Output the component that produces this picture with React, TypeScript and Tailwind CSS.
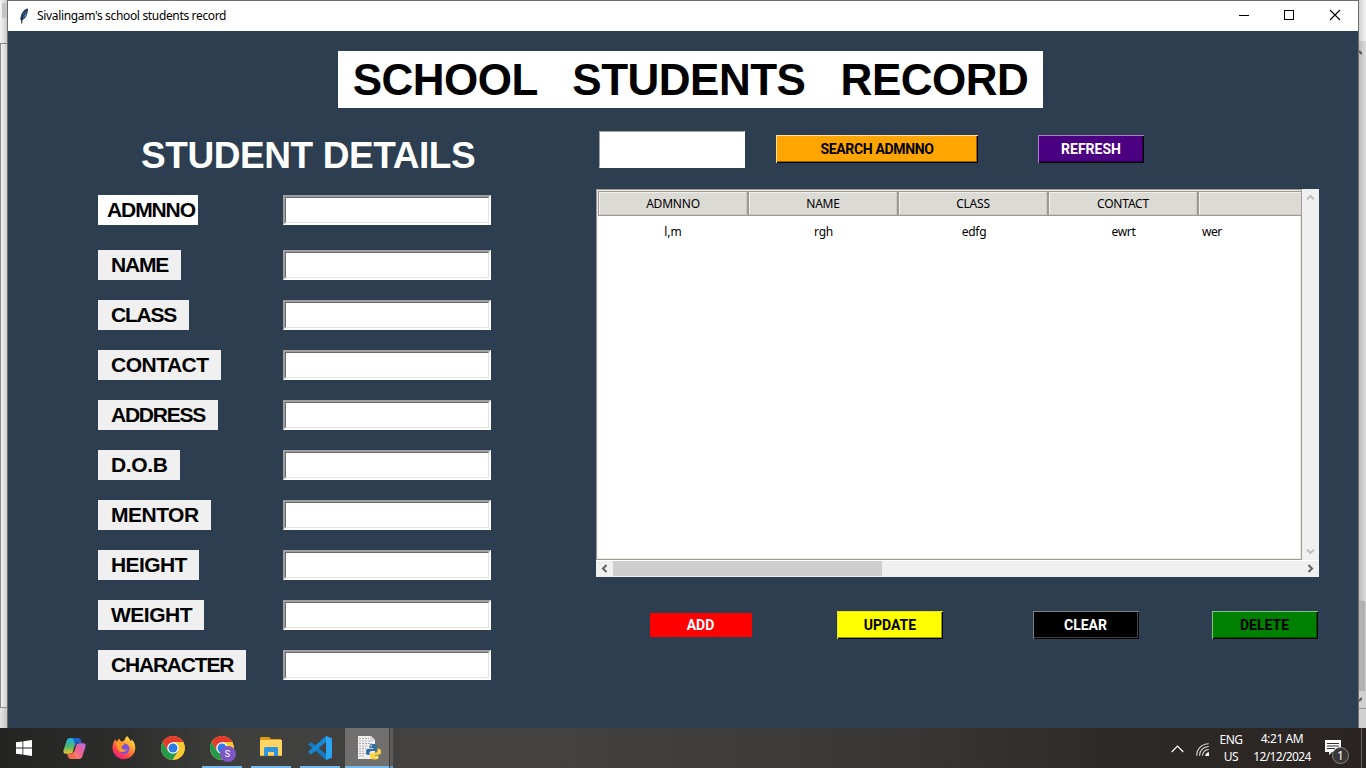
import React from "react";

const fields = [
  { label: "ADMNNO", box: "w-[100px] bg-white pl-[9px] tracking-[-1.1px]", row: "mb-[25px]" },
  { label: "NAME", box: "w-[83px] bg-[#f0f0f0] pl-[13px] tracking-[-1.15px]", row: "mb-5" },
  { label: "CLASS", box: "w-[91px] bg-[#f0f0f0] pl-[13px] tracking-[-1.2px]", row: "mb-5" },
  { label: "CONTACT", box: "w-[123px] bg-[#f0f0f0] pl-[13px] tracking-[-0.5px]", row: "mb-5" },
  { label: "ADDRESS", box: "w-[120px] bg-[#f0f0f0] pl-[13px] tracking-[-1.25px]", row: "mb-5" },
  { label: "D.O.B", box: "w-[82px] bg-[#f0f0f0] pl-[13px] tracking-[-0.35px]", row: "mb-5" },
  { label: "MENTOR", box: "w-[113px] bg-[#f0f0f0] pl-[13px] tracking-[-0.5px]", row: "mb-5" },
  { label: "HEIGHT", box: "w-[101px] bg-[#f0f0f0] pl-[13px] tracking-[-0.6px]", row: "mb-5" },
  { label: "WEIGHT", box: "w-[106px] bg-[#f0f0f0] pl-[13px] tracking-[-0.5px]", row: "mb-5" },
  { label: "CHARACTER", box: "w-[148px] bg-[#f0f0f0] pl-[13px] tracking-[-1.2px]", row: "" },
];

function TitleBar() {
  return (
    <div className="flex h-[30px] shrink-0 items-center bg-white text-black">
      <svg className="ml-[11px] h-4 w-[10px]" viewBox="0 0 10 16">
        <path d="M9 .5C5 1 1.5 5.5 1.3 11.5l1.2 1C6.5 11 9 6.500 9 .5Z" fill="#223b5c" />
        <path d="M8 2C5.500 3.500 3.500 7 3 10.800 6 9.500 7.600 6 8 2Z" fill="#5f9be0" />
        <path d="M7.500 2.500 3 10.500 2.700 15.500" fill="none" stroke="#111" strokeWidth="1" />
      </svg>
      <span className="ml-2 text-[12px] leading-4 tracking-[-0.34px]">Sivalingam's school students record</span>
      <div className="ml-auto flex h-full items-center">
        <svg className="h-[30px] w-[45px]" viewBox="0 0 45 30" shapeRendering="crispEdges"><path d="M17 14.500h10" stroke="#000" /></svg>
        <svg className="h-[30px] w-[45px]" viewBox="0 0 45 30" shapeRendering="crispEdges"><path d="M17.500 9.500h9v9h-9z" fill="none" stroke="#000" /></svg>
        <svg className="h-[30px] w-[46px]" viewBox="0 0 46 30"><path d="m18 9 10 10M28 9 18 19" stroke="#000" strokeWidth="1.100" /></svg>
      </div>
    </div>
  );
}

function Button({ children, className }: { children: React.ReactNode; className: string }) {
  return (
    <button className={`flex shrink-0 items-center justify-center font-['Roboto','Noto_Sans',sans-serif] text-[14px] font-bold leading-4 ${className}`}>
      {children}
    </button>
  );
}

function HeaderCell({ children, className = "w-[150px]" }: { children?: React.ReactNode; className?: string }) {
  return (
    <div className={`h-full shrink-0 border border-[#9e9a91] ${className}`}>
      <div className="flex h-full items-center justify-center border border-b-[#cbc9c1] border-l-[#f2f0ec] border-r-[#cbc9c1] border-t-[#f2f0ec] bg-[#dcdad5]">
        {children}
      </div>
    </div>
  );
}

function Arrow({ d, color, className }: { d: string; color: string; className: string }) {
  return (
    <div className={`flex h-[17px] w-[17px] shrink-0 items-center justify-center ${className}`}>
      <svg className="h-[9px] w-[9px]" viewBox="0 0 9 9"><path d={d} fill="none" stroke={color} strokeWidth="2" /></svg>
    </div>
  );
}

function StudentTable() {
  return (
    <div className="w-[723px] text-[12px] leading-4 text-black">
      <div className="flex h-[371px]">
        <div className="flex w-[706px] flex-col overflow-hidden border border-[#9e9a91] bg-white">
          <div className="flex h-[26px] shrink-0 border-l border-t border-[#eeebe7] tracking-[-0.2px]">
            <HeaderCell>ADMNNO</HeaderCell>
            <HeaderCell>NAME</HeaderCell>
            <HeaderCell>CLASS</HeaderCell>
            <HeaderCell>CONTACT</HeaderCell>
            <HeaderCell className="w-[150px]" />
          </div>
          <div className="flex flex-1 items-start border-b border-l border-r border-[#eeebe7] pt-2 tracking-[-0.25px]">
            <span className="w-[150px] shrink-0 text-center tracking-normal">l,m</span>
            <span className="w-[151px] shrink-0 text-center">rgh</span>
            <span className="w-[150px] shrink-0 text-center">edfg</span>
            <span className="w-[149px] shrink-0 text-center">ewrt</span>
            <span className="pl-1 tracking-[-0.5px]">wer</span>
          </div>
        </div>
        <div className="flex w-[17px] flex-col justify-between bg-[#f0f0f0]">
          <Arrow d="M1 6.500 4.500 3 8 6.500" color="#bfbfbf" className="" />
          <Arrow d="M1 2.500 4.500 6 8 2.500" color="#bfbfbf" className="" />
        </div>
      </div>
      <div className="flex h-[17px] items-stretch border-t border-white bg-[#f0f0f0]">
        <Arrow d="M6.500 1 3 4.500 6.500 8" color="#606060" className="-mt-px" />
        <div className="mb-px w-[269px] bg-[#cdcdcd]" />
        <Arrow d="M2.500 1 6 4.500 2.500 8" color="#606060" className="-mt-px ml-auto" />
      </div>
    </div>
  );
}

function Chrome({ className }: { className: string }) {
  return (
    <svg className={className} viewBox="0 0 24 24">
      <circle cx="12" cy="12" r="12" fill="#fcc934" />
      <path d="M1.600 6A12 12 0 0 0 11.500 24L17 15 12 12 7 15Z" fill="#249b4a" />
      <path d="M1.600 6A12 12 0 0 1 22.400 6H12L7 15Z" fill="#e33b2e" />
      <circle cx="12" cy="12" r="5.800" fill="#fff" />
      <circle cx="12" cy="12" r="4.500" fill="#2c7ce9" />
    </svg>
  );
}

function TaskItem({ children, open = false }: { children: React.ReactNode; open?: boolean }) {
  return (
    <div className="flex h-10 w-[49px] shrink-0 flex-col items-center">
      <div className="flex h-[38px] items-center justify-center pt-[2px]">{children}</div>
      {open && <div className="h-[2px] w-10 bg-[#76b9ed]" />}
    </div>
  );
}

function Taskbar() {
  return (
    <div className="flex h-10 w-full shrink-0 bg-[linear-gradient(90deg,#242423_0%,#2d2d2c_9%,#40403f_18%,#444342_38%,#3b3937_62%,#2d2927_82%,#2a2523_100%)]">
      <div className="flex w-[50px] items-center pl-4">
        <svg className="h-4 w-4" viewBox="0 0 16 16"><path fill="#fff" d="M0 2.300 6.500 1.400V7.600H0ZM7.300 1.300 16 0v7.600H7.300ZM0 8.400h6.500v6.200L0 13.700ZM7.300 8.400H16V16L7.300 14.700Z" /></svg>
      </div>
      <TaskItem>
        <svg className="h-[21px] w-[23px]" viewBox="0 0 23 21">
          <defs>
            <linearGradient id="cpa" x1="0" y1="0" x2="0" y2="1"><stop stopColor="#1bafe9" /><stop offset=".55" stopColor="#54b96c" /><stop offset="1" stopColor="#f1c52d" /></linearGradient>
            <linearGradient id="cpb" x1="1" y1="0" x2="0" y2="1"><stop stopColor="#b46ae8" /><stop offset=".5" stopColor="#ee6191" /><stop offset="1" stopColor="#ff9657" /></linearGradient>
          </defs>
          <path d="M7 0h7l-4 13c-.500 1.800-1.500 2.700-3.500 2.700H3C.5 15.700 0 14 .6 12L3.500 3C4 1 5.200 0 7 0Z" fill="url(#cpa)" />
          <path d="M8 0h7c2 0 2.600 1 3.200 3l.6 2h-3c-2 0-2.700 1-3.300 3L11 3C10.500 1.200 9.800 0 8 0Z" fill="#1762cc" />
          <path d="M16 21H9l4-13c.5-1.800 1.500-2.700 3.500-2.700H20c2.500 0 3 1.700 2.400 3.700L19.500 18c-.5 2-1.700 3-3.500 3Z" fill="url(#cpb)" />
          <path d="M15 21H8c-2 0-2.600-1-3.200-3l-.7-2.300h3c2 0 2.700-.7 3.300-2.700L12 18c.5 1.800 1.200 3 3 3Z" fill="#f06b52" />
        </svg>
      </TaskItem>
      <TaskItem>
        <svg className="h-6 w-6" viewBox="0 0 24 24">
          <defs><linearGradient id="ff" x1=".85" y1="0" x2=".2" y2="1"><stop stopColor="#fff04c" /><stop offset=".4" stopColor="#ff9a2d" /><stop offset=".75" stopColor="#ff3b52" /><stop offset="1" stopColor="#d91c9b" /></linearGradient></defs>
          <path d="M15 0c2 2 3 3.500 3.400 5 1-.2 1-.8 1.400-1.500C22.500 6 23.500 9 23.300 13A11.500 11.500 0 0 1 .5 13.500C.3 9 1.500 5.500 3.500 3c.2 1.500.5 2 1.200 2.700C5.500 4.200 6.500 3.200 7.500 2.500 7.400 4 8.300 5 10 5.500 11.500 5.500 12.500 4 13 3 13.500 2 14 1 15 0Z" fill="url(#ff)" />
          <circle cx="12.200" cy="12.700" r="5.200" fill="#7952dc" />
          <path d="M4 6.500c2-1 4.500-.4 6 .8l2.500.5c-.2 1.500-2.800 2-3 3.200 0 2.500 3 3.500 5.500 2-1.500 4-8 4.200-9.500-.5C4.800 10 4.900 8 4 6.500Z" fill="#ff9b25" />
        </svg>
      </TaskItem>
      <TaskItem><Chrome className="h-6 w-6" /></TaskItem>
      <TaskItem open>
        <div className="relative h-6 w-6">
          <Chrome className="h-6 w-6" />
          <span className="absolute left-[10px] top-[10px] flex h-4 w-4 items-center justify-center rounded-full bg-[#7e57c2] font-['Roboto',sans-serif] text-[9px] leading-none text-white">S</span>
        </div>
      </TaskItem>
      <TaskItem open>
        <svg className="-mt-1 h-[19px] w-[22px]" viewBox="0 0 22 19">
          <path d="M1 0h8l2 2h10v4H0V1Z" fill="#dc9c16" /><path d="M0 3h22v15H0Z" fill="#fdd565" /><path d="M0 18h22v1H0Z" fill="#edb93b" /><path d="M4 19v-8l1-1h12l1 1v8h-4v-4H8v4H4Z" fill="#2e94df" />
        </svg>
      </TaskItem>
      <TaskItem open>
        <svg className="h-6 w-6" viewBox="0 0 24 24">
          <path d="m18 0 6 2.500v19L18 24 0 8.500 3 6 18 18Z" fill="#1479c1" />
          <path d="M18 0v6L3 18.500 0 16Z" fill="#1688d5" />
          <path d="m18 0 6 2.500v19L18 24Z" fill="#2aa5f2" />
        </svg>
      </TaskItem>
      <div className="ml-px flex">
        <div className="flex w-11 flex-col items-center bg-[#71706f]">
          <div className="flex h-[38px] items-center pl-[3px] pt-[2px]">
            <svg className="h-6 w-6" viewBox="0 0 24 24">
              <path d="M1 0h13l4 4v19H1Z" fill="#f0f0f0" />
              <path d="M2 2.500h10M2 5h12M2 7.500h13M2 10h8M2 12.500h7M2 15h6M2 17.500h7M2 20h6" stroke="#999" strokeWidth=".8" strokeDasharray="2 1" />
              <path d="M13 0v5h5" fill="#d2d2d2" />
              <path d="M15.500 8c-2.500 0-3 .8-3 2v2h4v.800h-5.500c-1.500 0-2 1.500-2 3.200s.6 3 2 3h1.500v-2c0-1.200 1-2 2-2h3.500c1.200 0 1.800-.8 1.800-1.800V10c0-1.500-1.500-2-4.300-2Z" fill="#326f9f" />
              <path d="M18 23.500c2.800 0 3.500-.8 3.500-2v-2h-4v-.800H22c1.500 0 2-1.200 2-3s-.8-3-2-3h-1.500v2c0 1.200-.8 2-2 2H15c-1.200 0-2 .8-2 1.800v3c0 1.300 1.500 2 5 2Z" fill="#fbd546" />
              <circle cx="14.300" cy="10" r=".7" fill="#fff" /><circle cx="19.500" cy="21.500" r=".7" fill="#fff" />
            </svg>
          </div>
          <div className="h-[2px] w-full bg-[#76b9ed]" />
        </div>
        <div className="flex w-1 flex-col border-l border-[#3f3e3d] bg-[#5c5b5a]"><div className="mt-auto h-[2px] bg-[#619dca]" /></div>
      </div>
      <div className="ml-auto flex h-full w-[195px] items-center text-[12px] leading-[17px] text-white">
        <svg className="mt-[1px] h-[8px] w-[13px]" viewBox="0 0 13 8"><path d="M.7 7 6.500 1.200 12.300 7" fill="none" stroke="#fff" strokeWidth="1.200" /></svg>
        <svg className="ml-[12px] mt-[2px] h-[13px] w-[13px]" viewBox="0 0 13 13">
          <path d="M.7 12.700C.7 6 6 .7 12.700.7M3.500 12.700c0-5 4.200-9.200 9.200-9.200M6.500 12.700c0-3.500 2.700-6.200 6.200-6.200" fill="none" stroke="#ddd" strokeWidth="1.100" />
          <path d="M9.200 13c0-2 1.800-3.800 3.800-3.800V13Z" fill="#fff" />
        </svg>
        <div className="ml-[6px] w-[32px] text-center tracking-[-0.5px]"><div>ENG</div><div>US</div></div>
        <div className="-mt-px ml-px w-[68px] text-center leading-[18px]"><div className="tracking-[-0.4px]">4:21 AM</div><div className="tracking-[-0.62px]">12/12/2024</div></div>
        <div className="relative ml-2 h-6 w-6">
          <svg className="h-6 w-6" viewBox="0 0 24 24">
            <path d="M1 4h16v12H8l-3 3v-3H1Z" fill="#fff" /><path d="M3 7.500h12M3 10h12M3 12.500h8" stroke="#302d2b" />
          </svg>
          <span className="absolute left-[8px] top-[11px] flex h-[17px] w-[17px] items-center justify-center rounded-full border border-[#888] bg-[#393735] text-[12px] leading-none">1</span>
        </div>
        <div className="ml-auto mr-1 h-full w-px bg-[#696664]" />
      </div>
    </div>
  );
}

export default function App() {
  return (
    <div className="flex h-[768px] w-[1366px] flex-col overflow-hidden font-['Noto_Sans','Open_Sans',sans-serif]">
      <div className="flex h-[728px] shrink-0">
        <div className="flex w-[7px] flex-col bg-[#e9e9e9]">
          <div className="h-[44px] border-b border-[#858585] bg-gradient-to-r from-[#f5f5f5] to-[#cccccc] pl-[2px] pt-[3px]"><div className="h-[15px] bg-[#c4c4c4]" /></div>
          <div className="h-[664px] border-b border-l border-[#8c8c8c] bg-gradient-to-r from-[#f4f4f4] to-[#cfcfcf]" />
          <div className="flex-1 bg-gradient-to-r from-[#e5e5e5] to-[#c6c6c6]" />
        </div>
        <div className="flex w-[1352px] flex-col border-l border-r border-t border-[#6d6d70] bg-[#2c3e50]">
          <TitleBar />
          <main className="flex-1 pt-5 font-['Liberation_Sans',Arial,sans-serif]">
            <h1 className="ml-[330px] flex h-[57px] w-[705px] items-center justify-center whitespace-pre bg-white text-[44px] font-bold leading-none tracking-[-0.5px] text-black">SCHOOL   STUDENTS   RECORD</h1>
            <div className="flex">
              <section className="w-[588px] pl-[90px]">
                <h2 className="ml-[43px] h-[87px] pt-[28px] text-[37px] font-bold leading-10 tracking-[-0.42px] text-white">STUDENT DETAILS</h2>
                {fields.map((f) => (
                  <div key={f.label} className={`flex ${f.row}`}>
                    <div className="w-[185px]">
                      <div className={`h-[30px] whitespace-nowrap text-[21px] font-bold leading-[30px] text-black ${f.box}`}>{f.label}</div>
                    </div>
                    <div className="h-[30px] w-[208px] border-2 border-b-white border-l-[#a0a0a0] border-r-white border-t-[#a0a0a0]">
                      <div className="h-full border border-b-[#e3e3e3] border-l-[#696969] border-r-[#e3e3e3] border-t-[#696969] bg-white" />
                    </div>
                  </div>
                ))}
              </section>
              <section className="w-[723px]">
                <div className="flex h-[81px] items-start pl-[3px] pt-[23px]">
                  <div className="h-[37px] w-[146px] border border-b-white border-l-[#a0a0a0] border-r-white border-t-[#a0a0a0] bg-white" />
                  <Button className="ml-[31px] mt-1 h-7 w-[202px] bg-[#ffa500] tracking-[-0.35px] text-black shadow-[inset_1px_1px_#ffe0a0,inset_-1px_-1px_#000,inset_-2px_-2px_#996300]">SEARCH ADMNNO</Button>
                  <Button className="ml-[60px] mt-1 h-7 w-[106px] bg-[#4b0082] text-white shadow-[inset_1px_1px_#ac80c8,inset_-1px_-1px_#000,inset_-2px_-2px_#2d004e]">REFRESH</Button>
                </div>
                <div className="font-['Noto_Sans','Open_Sans',sans-serif]"><StudentTable /></div>
                <div className="flex items-center pl-[54px] pt-[34px]">
                  <Button className="h-6 w-[102px] bg-[#ff0000] pr-px text-white">ADD</Button>
                  <Button className="ml-[85px] h-7 w-[106px] bg-[#ffff00] text-black shadow-[inset_1px_1px_#e2e22b,inset_-1px_-1px_#000,inset_-2px_-2px_#999900]">UPDATE</Button>
                  <Button className="ml-[90px] h-7 w-[106px] bg-black pr-px text-white shadow-[inset_1px_1px_#808080,inset_-1px_-1px_#000,inset_-2px_-2px_#404040]">CLEAR</Button>
                  <Button className="ml-[73px] h-7 w-[106px] bg-[#008000] pr-px text-black shadow-[inset_1px_1px_#80c880,inset_-1px_-1px_#000,inset_-2px_-2px_#004d00]">DELETE</Button>
                </div>
              </section>
            </div>
          </main>
        </div>
        <div className="flex w-[7px] flex-col bg-[#d1d1d1]">
          <div className="h-[41px] bg-gradient-to-r from-[#d0d0d0] to-[#f4f4f4]" />
          <div className="h-[560px] bg-gradient-to-r from-[#bcbcbc] to-[#dcdcdc]"><svg className="mt-[8px] h-2 w-[3px]" viewBox="0 0 3 8"><path d="m0 2 3 3" stroke="#555" strokeWidth="2" /></svg></div>
          <div className="mr-px h-[90px] bg-[#b1b1b1]" />
          <svg className="h-[17px] w-[3px]" viewBox="0 0 3 17"><path d="m0 10 3-3" stroke="#555" strokeWidth="2" /></svg>
          <div className="h-px bg-[#999]" />
        </div>
      </div>
      <Taskbar />
    </div>
  );
}
